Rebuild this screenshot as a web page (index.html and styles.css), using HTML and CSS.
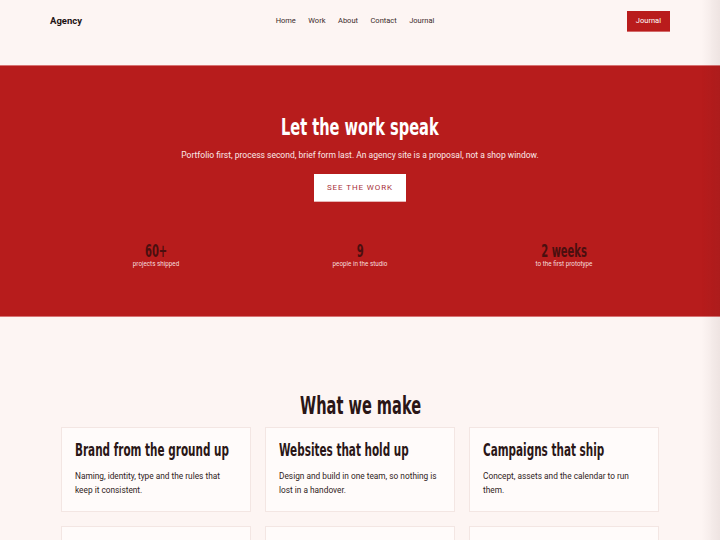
FILE: index.html
```html
<!DOCTYPE html>
<html lang="en">
<head>
<meta charset="utf-8">
<title>Agency</title>
<link rel="stylesheet" href="styles.css">
</head>
<body>
<header class="site-header">
  <div class="logo">Agency</div>
  <nav class="nav">
    <a href="#">Home</a>
    <a href="#">Work</a>
    <a href="#">About</a>
    <a href="#">Contact</a>
    <a href="#">Journal</a>
  </nav>
  <a class="header-btn" href="#">Journal</a>
</header>

<section class="hero">
  <h1 class="hero-title"><span class="cond">Let the work speak</span></h1>
  <p class="hero-sub">Portfolio first, process second, brief form last. An agency site is a proposal, not a shop window.</p>
  <a class="hero-btn" href="#">SEE THE WORK</a>
  <div class="stats">
    <div class="stat"><div class="stat-num"><span class="cond">60+</span></div><div class="stat-label">projects shipped</div></div>
    <div class="stat"><div class="stat-num"><span class="cond">9</span></div><div class="stat-label">people in the studio</div></div>
    <div class="stat"><div class="stat-num"><span class="cond">2 weeks</span></div><div class="stat-label">to the first prototype</div></div>
  </div>
</section>

<section class="make">
  <h2 class="make-title"><span class="cond">What we make</span></h2>
  <div class="cards">
    <div class="card"><h3><span class="cond">Brand from the ground up</span></h3><p>Naming, identity, type and the rules that keep it consistent.</p></div>
    <div class="card"><h3><span class="cond">Websites that hold up</span></h3><p>Design and build in one team, so nothing is lost in a handover.</p></div>
    <div class="card"><h3><span class="cond">Campaigns that ship</span></h3><p>Concept, assets and the calendar to run them.</p></div>
    <div class="card"><h3><span class="cond">Content that lasts</span></h3><p>Editorial systems and writing that carry the brand.</p></div>
    <div class="card"><h3><span class="cond">Products people use</span></h3><p>Research, interface and the details in between.</p></div>
    <div class="card"><h3><span class="cond">Support after launch</span></h3><p>Care plans that keep the work in good shape.</p></div>
  </div>
</section>
<div class="edge-shade"></div>
</body>
</html>
```

FILE: styles.css
```css
* { box-sizing: border-box; }
html, body { margin: 0; padding: 0; }
body {
  background: #fdf5f3;
  font-family: Roboto, "Liberation Sans", sans-serif;
  color: #2b1a1a;
  overflow: hidden;
}
a { text-decoration: none; color: inherit; }

.cond {
  display: inline-block;
  white-space: nowrap;
  transform-origin: center center;
}

.site-header {
  height: 65px;
  display: grid;
  grid-template-columns: 1fr auto 1fr;
  align-items: start;
  padding: 11px 50px 0 50px;
}
.logo {
  font-weight: 700;
  font-size: 9.5px;
  line-height: 20px;
  color: #1f1414;
}
.nav {
  display: flex;
  gap: 12.5px;
  font-size: 7.5px;
  line-height: 20px;
  color: #3a2a2a;
  margin-right: 10px;
}
.header-btn {
  justify-self: end;
  background: #b91c1c;
  color: #fff;
  font-size: 7.5px;
  height: 20px;
  line-height: 20px;
  padding: 0 9px;
  box-shadow: 0 1px 0 #d46a6a;
}

.hero {
  background: #b71c1c;
  border-top: 1px solid #d87373;
  border-bottom: 1px solid #d87373;
  height: 252px;
  display: flex;
  flex-direction: column;
  align-items: center;
  padding-top: 46px;
  color: #fff;
}
.hero-title {
  margin: 0;
  font-family: "DejaVu Sans Condensed", "DejaVu Sans", sans-serif;
  font-weight: 700;
  font-size: 23px;
  line-height: 30px;
  color: #fff;
}
.hero-title .cond { transform: scaleX(0.705); }
.hero-sub {
  margin: 7px 0 0;
  font-size: 8.5px;
  line-height: 12px;
  color: #fbe9e9;
}
.hero-btn {
  margin-top: 13px;
  width: 92px;
  height: 27px;
  background: #fff;
  color: #a8323a;
  font-size: 8px;
  letter-spacing: 0.9px;
  display: flex;
  align-items: center;
  justify-content: center;
  box-shadow: 0 1px 0 #e7b5b5;
}
.stats {
  margin-top: 41px;
  width: 612px;
  display: grid;
  grid-template-columns: repeat(3, 1fr);
}
.stat { text-align: center; }
.stat-num {
  font-family: "DejaVu Sans Condensed", "DejaVu Sans", sans-serif;
  font-weight: 700;
  font-size: 17px;
  line-height: 18px;
  color: #4a0f0f;
}
.stat-num .cond { transform: scaleX(0.65); }
.stat-label {
  font-size: 6.3px;
  line-height: 9px;
  color: #f6dede;
}

.make {
  padding: 74px 60px 0 61px;
}
.make-title {
  margin: 0;
  text-align: center;
  font-family: "DejaVu Sans Condensed", "DejaVu Sans", sans-serif;
  font-weight: 700;
  font-size: 24px;
  line-height: 30px;
  color: #2a1616;
}
.make-title .cond { transform: scaleX(0.675); }
.cards {
  margin-top: 6px;
  display: grid;
  grid-template-columns: repeat(3, 190px);
  gap: 14px;
}
.card {
  background: #fffbfa;
  border: 1px solid #f3e6e3;
  height: 85px;
  padding: 11px 15px 11px 13px;
}
.card h3 {
  margin: 0;
  font-family: "DejaVu Sans Condensed", "DejaVu Sans", sans-serif;
  font-weight: 700;
  font-size: 18px;
  line-height: 22px;
  color: #2a1616;
}
.card h3 .cond {
  transform: scaleX(0.645);
  transform-origin: left center;
}
.card p {
  margin: 8px 0 0;
  font-size: 8.3px;
  line-height: 14px;
  color: #2f2222;
}

.edge-shade {
  position: fixed;
  top: 0;
  right: 0;
  bottom: 0;
  width: 18px;
  background: linear-gradient(to right, rgba(60,30,30,0), rgba(60,30,30,0.08));
  pointer-events: none;
}
```
